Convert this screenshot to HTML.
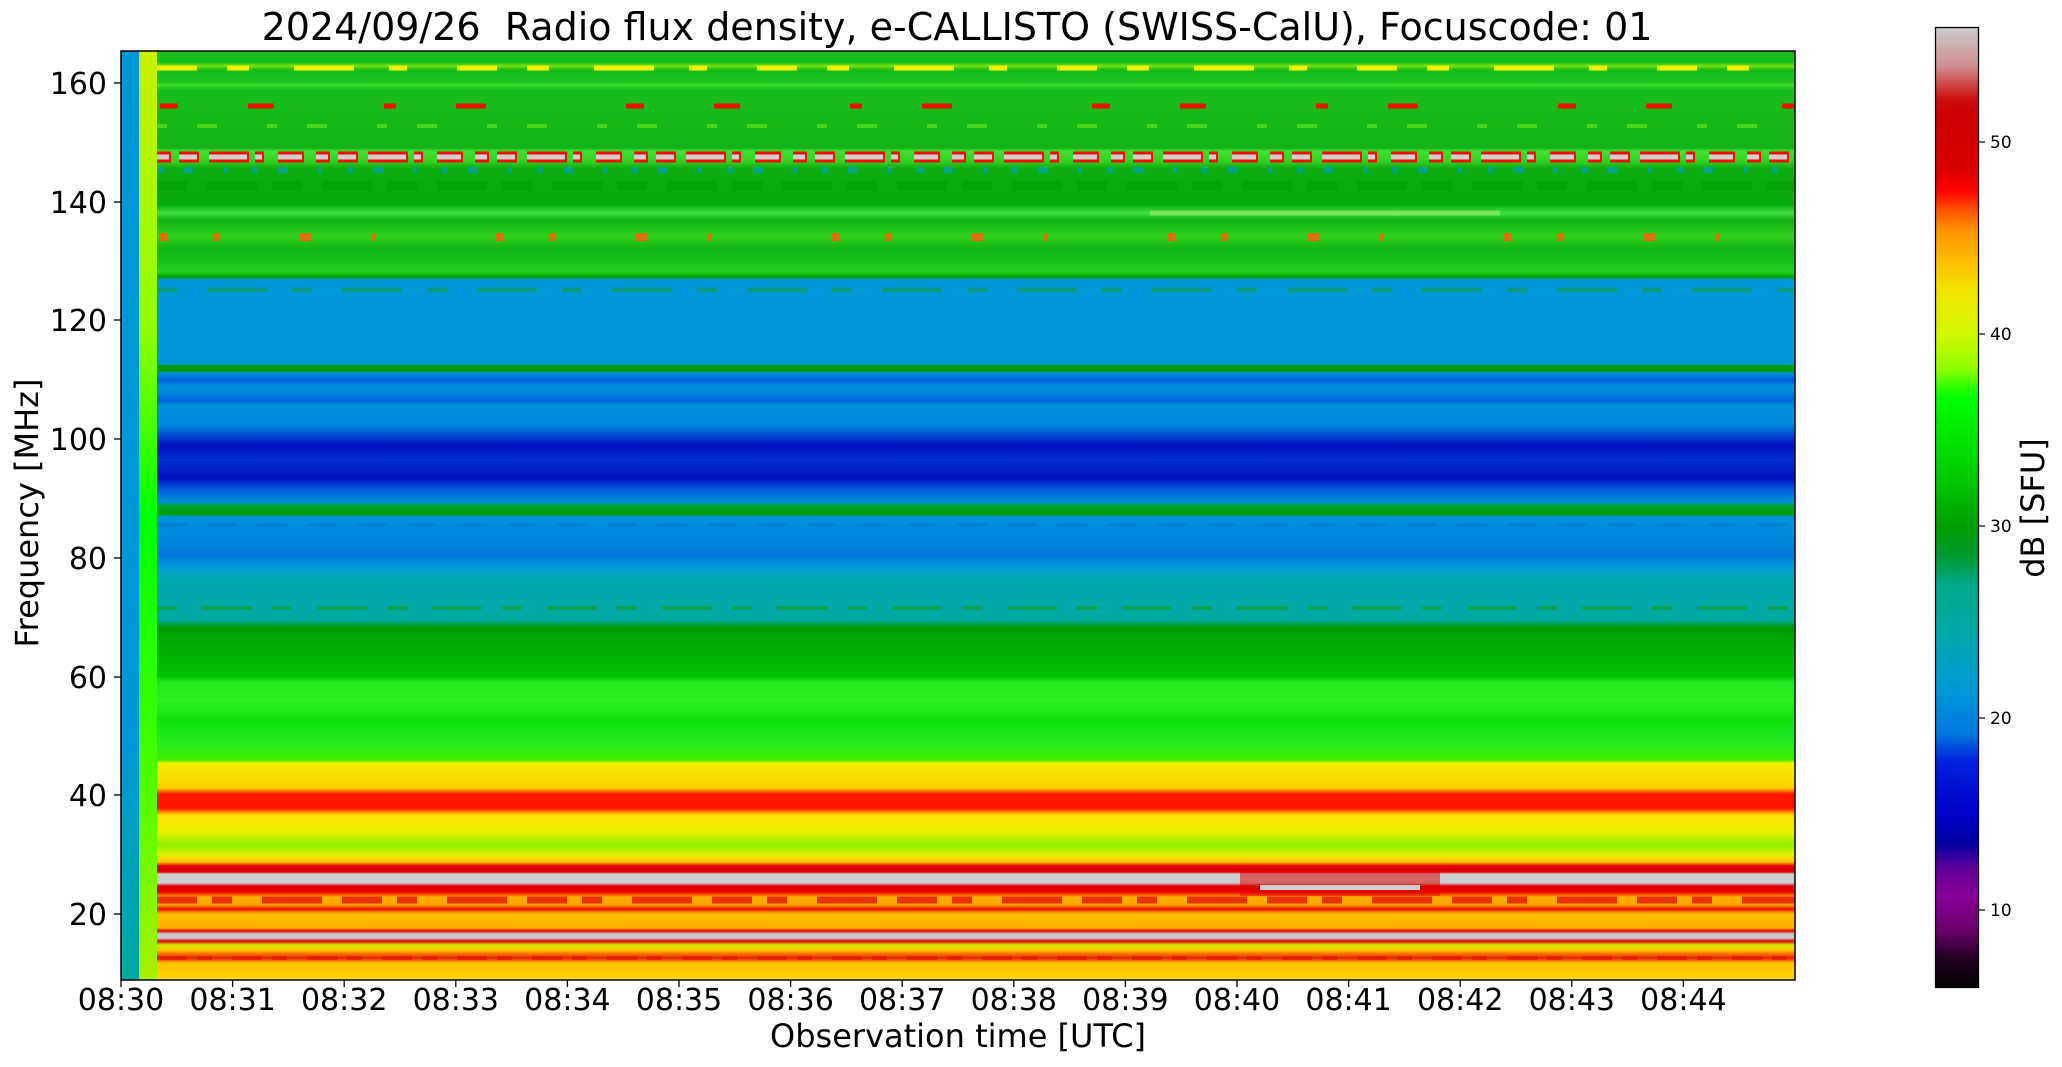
<!DOCTYPE html>
<html><head><meta charset="utf-8"><style>
html,body{margin:0;padding:0;background:#fff;width:2062px;height:1067px;overflow:hidden}
svg text{font-family:"DejaVu Sans","Liberation Sans",sans-serif;fill:#000}
</style></head><body>
<svg width="2062" height="1067" viewBox="0 0 2062 1067" xmlns="http://www.w3.org/2000/svg">
<defs>
<linearGradient id="sp" gradientUnits="userSpaceOnUse" x1="0" y1="0" x2="0" y2="1000">
<stop offset="0.051" stop-color="#20bc20"/>
<stop offset="0.062" stop-color="#18bc18"/>
<stop offset="0.066" stop-color="#70e010"/>
<stop offset="0.070" stop-color="#18bc18"/>
<stop offset="0.082" stop-color="#20c420"/>
<stop offset="0.085" stop-color="#40e030"/>
<stop offset="0.090" stop-color="#18bc18"/>
<stop offset="0.148" stop-color="#14b414"/>
<stop offset="0.151" stop-color="#40e030"/>
<stop offset="0.162" stop-color="#30d020"/>
<stop offset="0.168" stop-color="#10ac10"/>
<stop offset="0.205" stop-color="#08ac08"/>
<stop offset="0.213" stop-color="#40e040"/>
<stop offset="0.220" stop-color="#10b410"/>
<stop offset="0.236" stop-color="#30d020"/>
<stop offset="0.250" stop-color="#10b410"/>
<stop offset="0.272" stop-color="#20d020"/>
<stop offset="0.277" stop-color="#00a000"/>
<stop offset="0.280" stop-color="#0098d8"/>
<stop offset="0.364" stop-color="#0098d8"/>
<stop offset="0.366" stop-color="#009c00"/>
<stop offset="0.371" stop-color="#009c00"/>
<stop offset="0.373" stop-color="#0090dc"/>
<stop offset="0.380" stop-color="#0060dc"/>
<stop offset="0.386" stop-color="#0090dc"/>
<stop offset="0.393" stop-color="#0088dc"/>
<stop offset="0.400" stop-color="#0064dc"/>
<stop offset="0.406" stop-color="#0090dc"/>
<stop offset="0.425" stop-color="#0088dc"/>
<stop offset="0.437" stop-color="#0040d0"/>
<stop offset="0.446" stop-color="#0010c0"/>
<stop offset="0.460" stop-color="#0030cc"/>
<stop offset="0.478" stop-color="#0010c0"/>
<stop offset="0.490" stop-color="#0060dc"/>
<stop offset="0.502" stop-color="#0090dc"/>
<stop offset="0.505" stop-color="#00a040"/>
<stop offset="0.514" stop-color="#009c00"/>
<stop offset="0.517" stop-color="#0092dc"/>
<stop offset="0.545" stop-color="#0084dc"/>
<stop offset="0.555" stop-color="#0076dc"/>
<stop offset="0.566" stop-color="#0098d8"/>
<stop offset="0.578" stop-color="#00a8b0"/>
<stop offset="0.620" stop-color="#00a8a0"/>
<stop offset="0.628" stop-color="#009a00"/>
<stop offset="0.640" stop-color="#00a800"/>
<stop offset="0.676" stop-color="#00c000"/>
<stop offset="0.682" stop-color="#20e820"/>
<stop offset="0.700" stop-color="#30f020"/>
<stop offset="0.720" stop-color="#10e010"/>
<stop offset="0.740" stop-color="#20e820"/>
<stop offset="0.760" stop-color="#40f000"/>
<stop offset="0.763" stop-color="#f0f000"/>
<stop offset="0.788" stop-color="#ffd000"/>
<stop offset="0.794" stop-color="#ff1800"/>
<stop offset="0.808" stop-color="#ff1000"/>
<stop offset="0.815" stop-color="#ffe000"/>
<stop offset="0.832" stop-color="#e8f000"/>
<stop offset="0.845" stop-color="#90f000"/>
<stop offset="0.855" stop-color="#e0f000"/>
<stop offset="0.862" stop-color="#ffc000"/>
<stop offset="0.866" stop-color="#e00000"/>
<stop offset="0.872" stop-color="#e00000"/>
<stop offset="0.874" stop-color="#cccccc"/>
<stop offset="0.883" stop-color="#cccccc"/>
<stop offset="0.886" stop-color="#e00000"/>
<stop offset="0.892" stop-color="#e80000"/>
<stop offset="0.897" stop-color="#ffb000"/>
<stop offset="0.905" stop-color="#ffa000"/>
<stop offset="0.909" stop-color="#e81000"/>
<stop offset="0.914" stop-color="#ffc000"/>
<stop offset="0.928" stop-color="#ffb000"/>
<stop offset="0.931" stop-color="#e00000"/>
<stop offset="0.934" stop-color="#cccccc"/>
<stop offset="0.938" stop-color="#cccccc"/>
<stop offset="0.941" stop-color="#e00000"/>
<stop offset="0.945" stop-color="#c8f000"/>
<stop offset="0.950" stop-color="#ffc000"/>
<stop offset="0.958" stop-color="#e82000"/>
<stop offset="0.963" stop-color="#ffc000"/>
<stop offset="0.980" stop-color="#ffd800"/>
</linearGradient>
<linearGradient id="c1" x1="0" y1="0" x2="0" y2="1">
<stop offset="0" stop-color="#0098d8"/><stop offset="0.75" stop-color="#0098d8"/><stop offset="1" stop-color="#00a8a0"/>
</linearGradient>
<linearGradient id="c2" x1="0" y1="0" x2="0" y2="1">
<stop offset="0" stop-color="#c8f000"/><stop offset="0.3" stop-color="#90ff00"/><stop offset="0.5" stop-color="#00ff00"/><stop offset="0.75" stop-color="#40ff00"/><stop offset="1" stop-color="#a8f000"/>
</linearGradient>
<linearGradient id="cb" gradientUnits="userSpaceOnUse" x1="0" y1="27" x2="0" y2="988">
<stop offset="0" stop-color="#cccccc"/>
<stop offset="0.04" stop-color="#d09090"/>
<stop offset="0.075" stop-color="#cc1010"/>
<stop offset="0.09" stop-color="#cc0000"/>
<stop offset="0.15" stop-color="#dd0000"/>
<stop offset="0.17" stop-color="#ff0000"/>
<stop offset="0.19" stop-color="#ff5000"/>
<stop offset="0.21" stop-color="#ff9000"/>
<stop offset="0.24" stop-color="#ffb800"/>
<stop offset="0.27" stop-color="#f4e000"/>
<stop offset="0.32" stop-color="#d0f800"/>
<stop offset="0.355" stop-color="#90ff00"/>
<stop offset="0.385" stop-color="#00ff00"/>
<stop offset="0.45" stop-color="#00d800"/>
<stop offset="0.52" stop-color="#009e00"/>
<stop offset="0.55" stop-color="#009a30"/>
<stop offset="0.58" stop-color="#00a888"/>
<stop offset="0.63" stop-color="#00a8a8"/>
<stop offset="0.69" stop-color="#0098d8"/>
<stop offset="0.735" stop-color="#0078dc"/>
<stop offset="0.765" stop-color="#0020dc"/>
<stop offset="0.82" stop-color="#0000c8"/>
<stop offset="0.85" stop-color="#0000a0"/>
<stop offset="0.875" stop-color="#600099"/>
<stop offset="0.905" stop-color="#880099"/>
<stop offset="0.94" stop-color="#6a006a"/>
<stop offset="0.97" stop-color="#200020"/>
<stop offset="1" stop-color="#000000"/>
</linearGradient>
</defs>

<text x="957" y="40" font-size="38" text-anchor="middle" xml:space="preserve">2024/09/26  Radio flux density, e-CALLISTO (SWISS-CalU), Focuscode: 01</text>

<rect x="121" y="51" width="1674" height="929" fill="url(#sp)"/>
<g stroke-linecap="butt">
<line x1="157" y1="68" x2="1795" y2="68" stroke="#f0f000" stroke-width="5" stroke-dasharray="40 30 22 45 60 35 18 50"/>
<line x1="160" y1="106" x2="1795" y2="106" stroke="#ee1000" stroke-width="5" stroke-dasharray="18 70 26 110 12 60 30 140"/>
<line x1="157" y1="157" x2="1795" y2="157" stroke="#ee1000" stroke-width="11" stroke-dasharray="14 8 20 10 40 6 9 14 26 12"/>
<line x1="157" y1="157" x2="1795" y2="157" stroke="#d0d0d0" stroke-width="5" stroke-dasharray="12 10 18 12 38 8 7 16 24 14"/>
<line x1="157" y1="170" x2="1795" y2="170" stroke="#00a0c0" stroke-width="6" stroke-dasharray="6 20 10 30 4 25" opacity="0.7"/>
<line x1="160" y1="237" x2="1795" y2="237" stroke="#ff6000" stroke-width="8" stroke-dasharray="8 45 6 80 12 60 5 120" opacity="0.85"/>
<line x1="157" y1="126" x2="1795" y2="126" stroke="#60e020" stroke-width="4" stroke-dasharray="10 30 20 50" opacity="0.7"/>
<line x1="157" y1="186" x2="1795" y2="186" stroke="#00a000" stroke-width="10" stroke-dasharray="30 20 50 15" opacity="0.5"/>
<line x1="1150" y1="213" x2="1500" y2="213" stroke="#90f060" stroke-width="5" opacity="0.7"/>
<line x1="157" y1="290" x2="1795" y2="290" stroke="#109c50" stroke-width="5" stroke-dasharray="20 30 60 25" opacity="0.6"/>
<line x1="157" y1="525" x2="1795" y2="525" stroke="#0070d0" stroke-width="3" stroke-dasharray="30 20" opacity="0.5"/>
<line x1="157" y1="608" x2="1795" y2="608" stroke="#10a010" stroke-width="4" stroke-dasharray="20 25 50 20" opacity="0.5"/>
<line x1="157" y1="900" x2="1795" y2="900" stroke="#dd0000" stroke-width="7" stroke-dasharray="40 15 20 30 60 20" opacity="0.7"/>
<line x1="157" y1="958" x2="1795" y2="958" stroke="#e01000" stroke-width="4" stroke-dasharray="30 10 15 20" opacity="0.6"/>
<rect x="1240" y="868" width="200" height="28" fill="#dd0000" opacity="0.5"/>
<rect x="1260" y="885" width="160" height="5" fill="#d0d0d0"/>
</g>
<rect x="121" y="51" width="18" height="929" fill="url(#c1)"/>
<rect x="139" y="51" width="18" height="929" fill="url(#c2)"/>
<rect x="121" y="51" width="1674" height="929" fill="none" stroke="#000" stroke-width="1.5"/>

<g stroke="#000" stroke-width="1.3">
<line x1="114" y1="83" x2="121" y2="83"/><line x1="114" y1="202" x2="121" y2="202"/><line x1="114" y1="320" x2="121" y2="320"/><line x1="114" y1="439" x2="121" y2="439"/><line x1="114" y1="558" x2="121" y2="558"/><line x1="114" y1="677" x2="121" y2="677"/><line x1="114" y1="795" x2="121" y2="795"/><line x1="114" y1="914" x2="121" y2="914"/>
</g>
<g font-size="30" text-anchor="end">
<text x="107" y="94">160</text><text x="107" y="213">140</text><text x="107" y="331">120</text><text x="107" y="450">100</text><text x="107" y="569">80</text><text x="107" y="688">60</text><text x="107" y="806">40</text><text x="107" y="925">20</text>
</g>
<text transform="translate(38,513) rotate(-90)" font-size="32" text-anchor="middle">Frequency [MHz]</text>

<g stroke="#000" stroke-width="1.3">
<line x1="121" y1="980" x2="121" y2="987"/><line x1="232.6" y1="980" x2="232.6" y2="987"/><line x1="344.2" y1="980" x2="344.2" y2="987"/><line x1="455.8" y1="980" x2="455.8" y2="987"/><line x1="567.4" y1="980" x2="567.4" y2="987"/><line x1="679" y1="980" x2="679" y2="987"/><line x1="790.6" y1="980" x2="790.6" y2="987"/><line x1="902.2" y1="980" x2="902.2" y2="987"/><line x1="1013.8" y1="980" x2="1013.8" y2="987"/><line x1="1125.4" y1="980" x2="1125.4" y2="987"/><line x1="1237" y1="980" x2="1237" y2="987"/><line x1="1348.6" y1="980" x2="1348.6" y2="987"/><line x1="1460.2" y1="980" x2="1460.2" y2="987"/><line x1="1571.8" y1="980" x2="1571.8" y2="987"/><line x1="1683.4" y1="980" x2="1683.4" y2="987"/>
</g>
<g font-size="30" text-anchor="middle">
<text x="121" y="1010">08:30</text><text x="232.6" y="1010">08:31</text><text x="344.2" y="1010">08:32</text><text x="455.8" y="1010">08:33</text><text x="567.4" y="1010">08:34</text><text x="679" y="1010">08:35</text><text x="790.6" y="1010">08:36</text><text x="902.2" y="1010">08:37</text><text x="1013.8" y="1010">08:38</text><text x="1125.4" y="1010">08:39</text><text x="1237" y="1010">08:40</text><text x="1348.6" y="1010">08:41</text><text x="1460.2" y="1010">08:42</text><text x="1571.8" y="1010">08:43</text><text x="1683.4" y="1010">08:44</text>
</g>
<text x="958" y="1047" font-size="32" text-anchor="middle">Observation time [UTC]</text>

<rect x="1935.5" y="27.5" width="43" height="960" fill="url(#cb)" stroke="#000" stroke-width="1.3"/>
<g stroke="#000" stroke-width="1.2">
<line x1="1979" y1="142" x2="1985" y2="142"/><line x1="1979" y1="334" x2="1985" y2="334"/><line x1="1979" y1="526" x2="1985" y2="526"/><line x1="1979" y1="718" x2="1985" y2="718"/><line x1="1979" y1="910" x2="1985" y2="910"/>
</g>
<g font-size="17">
<text x="1990" y="148">50</text><text x="1990" y="340">40</text><text x="1990" y="532">30</text><text x="1990" y="724">20</text><text x="1990" y="916">10</text>
</g>
<text transform="translate(2044,508) rotate(-90)" font-size="32" text-anchor="middle">dB [SFU]</text>
</svg>
</body></html>
